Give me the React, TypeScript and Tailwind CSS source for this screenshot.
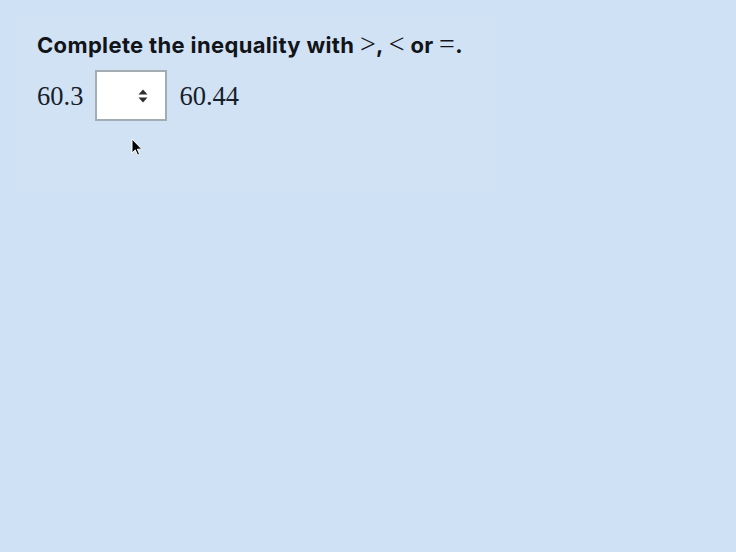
function Cursor() {
  return (
    <svg
      className="pointer-events-none absolute left-[131px] top-[138px]"
      width="12"
      height="19"
      viewBox="0 0 12 19"
    >
      <path
        d="M1 1 L1 15 L4.3 11.9 L6.6 17.2 L8.6 16.3 L6.4 11.2 L10.8 11.2 Z"
        fill="#000"
        stroke="#fff"
        strokeWidth="1"
        strokeLinejoin="round"
      />
    </svg>
  );
}

function UpDown() {
  return (
    <svg width="10" height="14" viewBox="0 0 10 14" className="text-[#2b2f33]">
      <path d="M5 0.5 L9.5 5.5 L0.5 5.5 Z" fill="currentColor" />
      <path d="M5 13.5 L9.5 8.5 L0.5 8.5 Z" fill="currentColor" />
    </svg>
  );
}

const mathSym = "font-['Liberation_Serif',serif] text-[28px] font-normal leading-none";

export default function App() {
  return (
    <div className="relative h-[552px] w-[736px] bg-[#cfe1f5] p-4">
      <div className="h-[175px] w-[480px] bg-[#d1e2f5] pl-[21px] pt-[14px]">
        <h1 className="font-['Inter',sans-serif] text-[22px] font-bold leading-[28px] tracking-[0.35px] text-[#111418]">
          Complete the inequality with <span className={mathSym}>&gt;</span>,{" "}
          <span className={mathSym}>&lt;</span> or <span className={mathSym}>=</span>.
        </h1>
        <div className="mt-[11px] flex items-center gap-3 font-['Liberation_Serif',serif] text-[26.5px] text-[#16202a]">
          <span className="pt-[2px]">60.3</span>
          <div className="flex h-[51px] w-[72px] items-center justify-end border-2 border-[#a3abb3] bg-white pr-[17px]">
            <UpDown />
          </div>
          <span className="pt-[2px]">60.44</span>
        </div>
      </div>
      <Cursor />
    </div>
  );
}
